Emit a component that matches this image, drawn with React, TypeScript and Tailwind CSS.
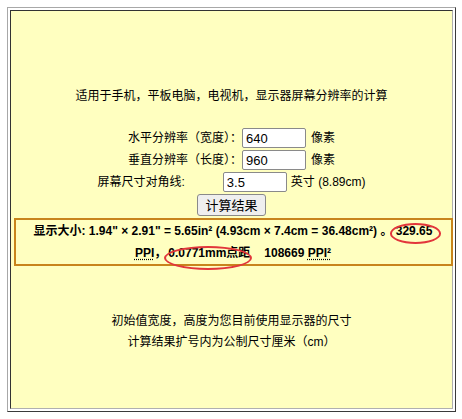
import React from "react";

const font = { fontFamily: '"Liberation Sans", "Noto Sans CJK SC", sans-serif' };

const Ring: React.FC<{ className: string }> = ({ className }) => (
  <span className={`pointer-events-none absolute rounded-[50%] border-2 border-[#e2363b] ${className}`} />
);

const Field: React.FC<{ value: string }> = ({ value }) => (
  <input
    readOnly
    value={value}
    className="h-[20px] w-[64px] rounded-[2px] border border-[#8a8a8a] bg-white pl-[3px] text-[13px] text-black outline-none"
  />
);

const App: React.FC = () => {
  return (
    <div className="min-h-[419px] bg-white pt-[7px] pl-[7px] text-black" style={font}>
      <div className="h-[405px] w-[449px] border border-t-[#a8a8a8] border-l-[#a8a8a8] border-b-[#3a3a3a] border-r-[#3a3a3a] p-[2px]">
        <div className="flex h-full flex-col items-center border border-t-[#333] border-l-[#333] border-b-[#b0b0b0] border-r-[#b0b0b0] bg-[#ffffc0] pt-[75px]">
          <p className="text-[12px] leading-[20px]">适用于手机，平板电脑，电视机，显示器屏幕分辨率的计算</p>

          {/* 输入 */}
          <div className="mt-[22px] flex flex-col items-center gap-[2px] text-[12px]">
            <div className="flex h-[20px] items-center">
              <span>水平分辨率（宽度）：</span>
              <Field value="640" />
              <span className="ml-[5px]">像素</span>
            </div>
            <div className="flex h-[20px] items-center">
              <span>垂直分辨率（长度）：</span>
              <Field value="960" />
              <span className="ml-[5px]">像素</span>
            </div>
            <div className="flex h-[20px] items-center">
              <span>屏幕尺寸对角线:</span>
              <span className="ml-[38px]">
                <Field value="3.5" />
              </span>
              <span className="ml-[4px]">英寸 (8.89cm)</span>
            </div>
            <button className="h-[22px] rounded-[3px] border border-[#8a8a8a] bg-[#efefef] px-[7px] text-[13px] leading-none">
              计算结果
            </button>
          </div>

          {/* 结果 */}
          <div className="mt-[2px] ml-[3px] w-[439px] border-2 border-[#c8841c] text-center text-[12px] font-bold leading-[22px]">
            <div>
              显示大小: 1.94" × 2.91" = 5.65in² (4.93cm × 7.4cm = 36.48cm²) 。{" "}
              <span className="relative">
                329.65
                <Ring className="-left-[6px] -right-[9px] -top-[1px] -bottom-[6px]" />
              </span>
            </div>
            <div>
              <span className="underline decoration-dotted underline-offset-2">PPI</span>，
              <span className="relative ml-[2px]">
                0.0771mm点距
                <Ring className="-left-[4px] -right-[2px] top-0 -bottom-[10px]" />
              </span>
              <span className="ml-[14px]">108669 </span>
              <span className="underline decoration-dotted underline-offset-2">PPI²</span>
            </div>
          </div>

          <div className="mt-[45px] text-center text-[12px] leading-[21px]">
            <p>初始值宽度，高度为您目前使用显示器的尺寸</p>
            <p>计算结果扩号内为公制尺寸厘米（cm）</p>
          </div>
        </div>
      </div>
    </div>
  );
};

export default App;
